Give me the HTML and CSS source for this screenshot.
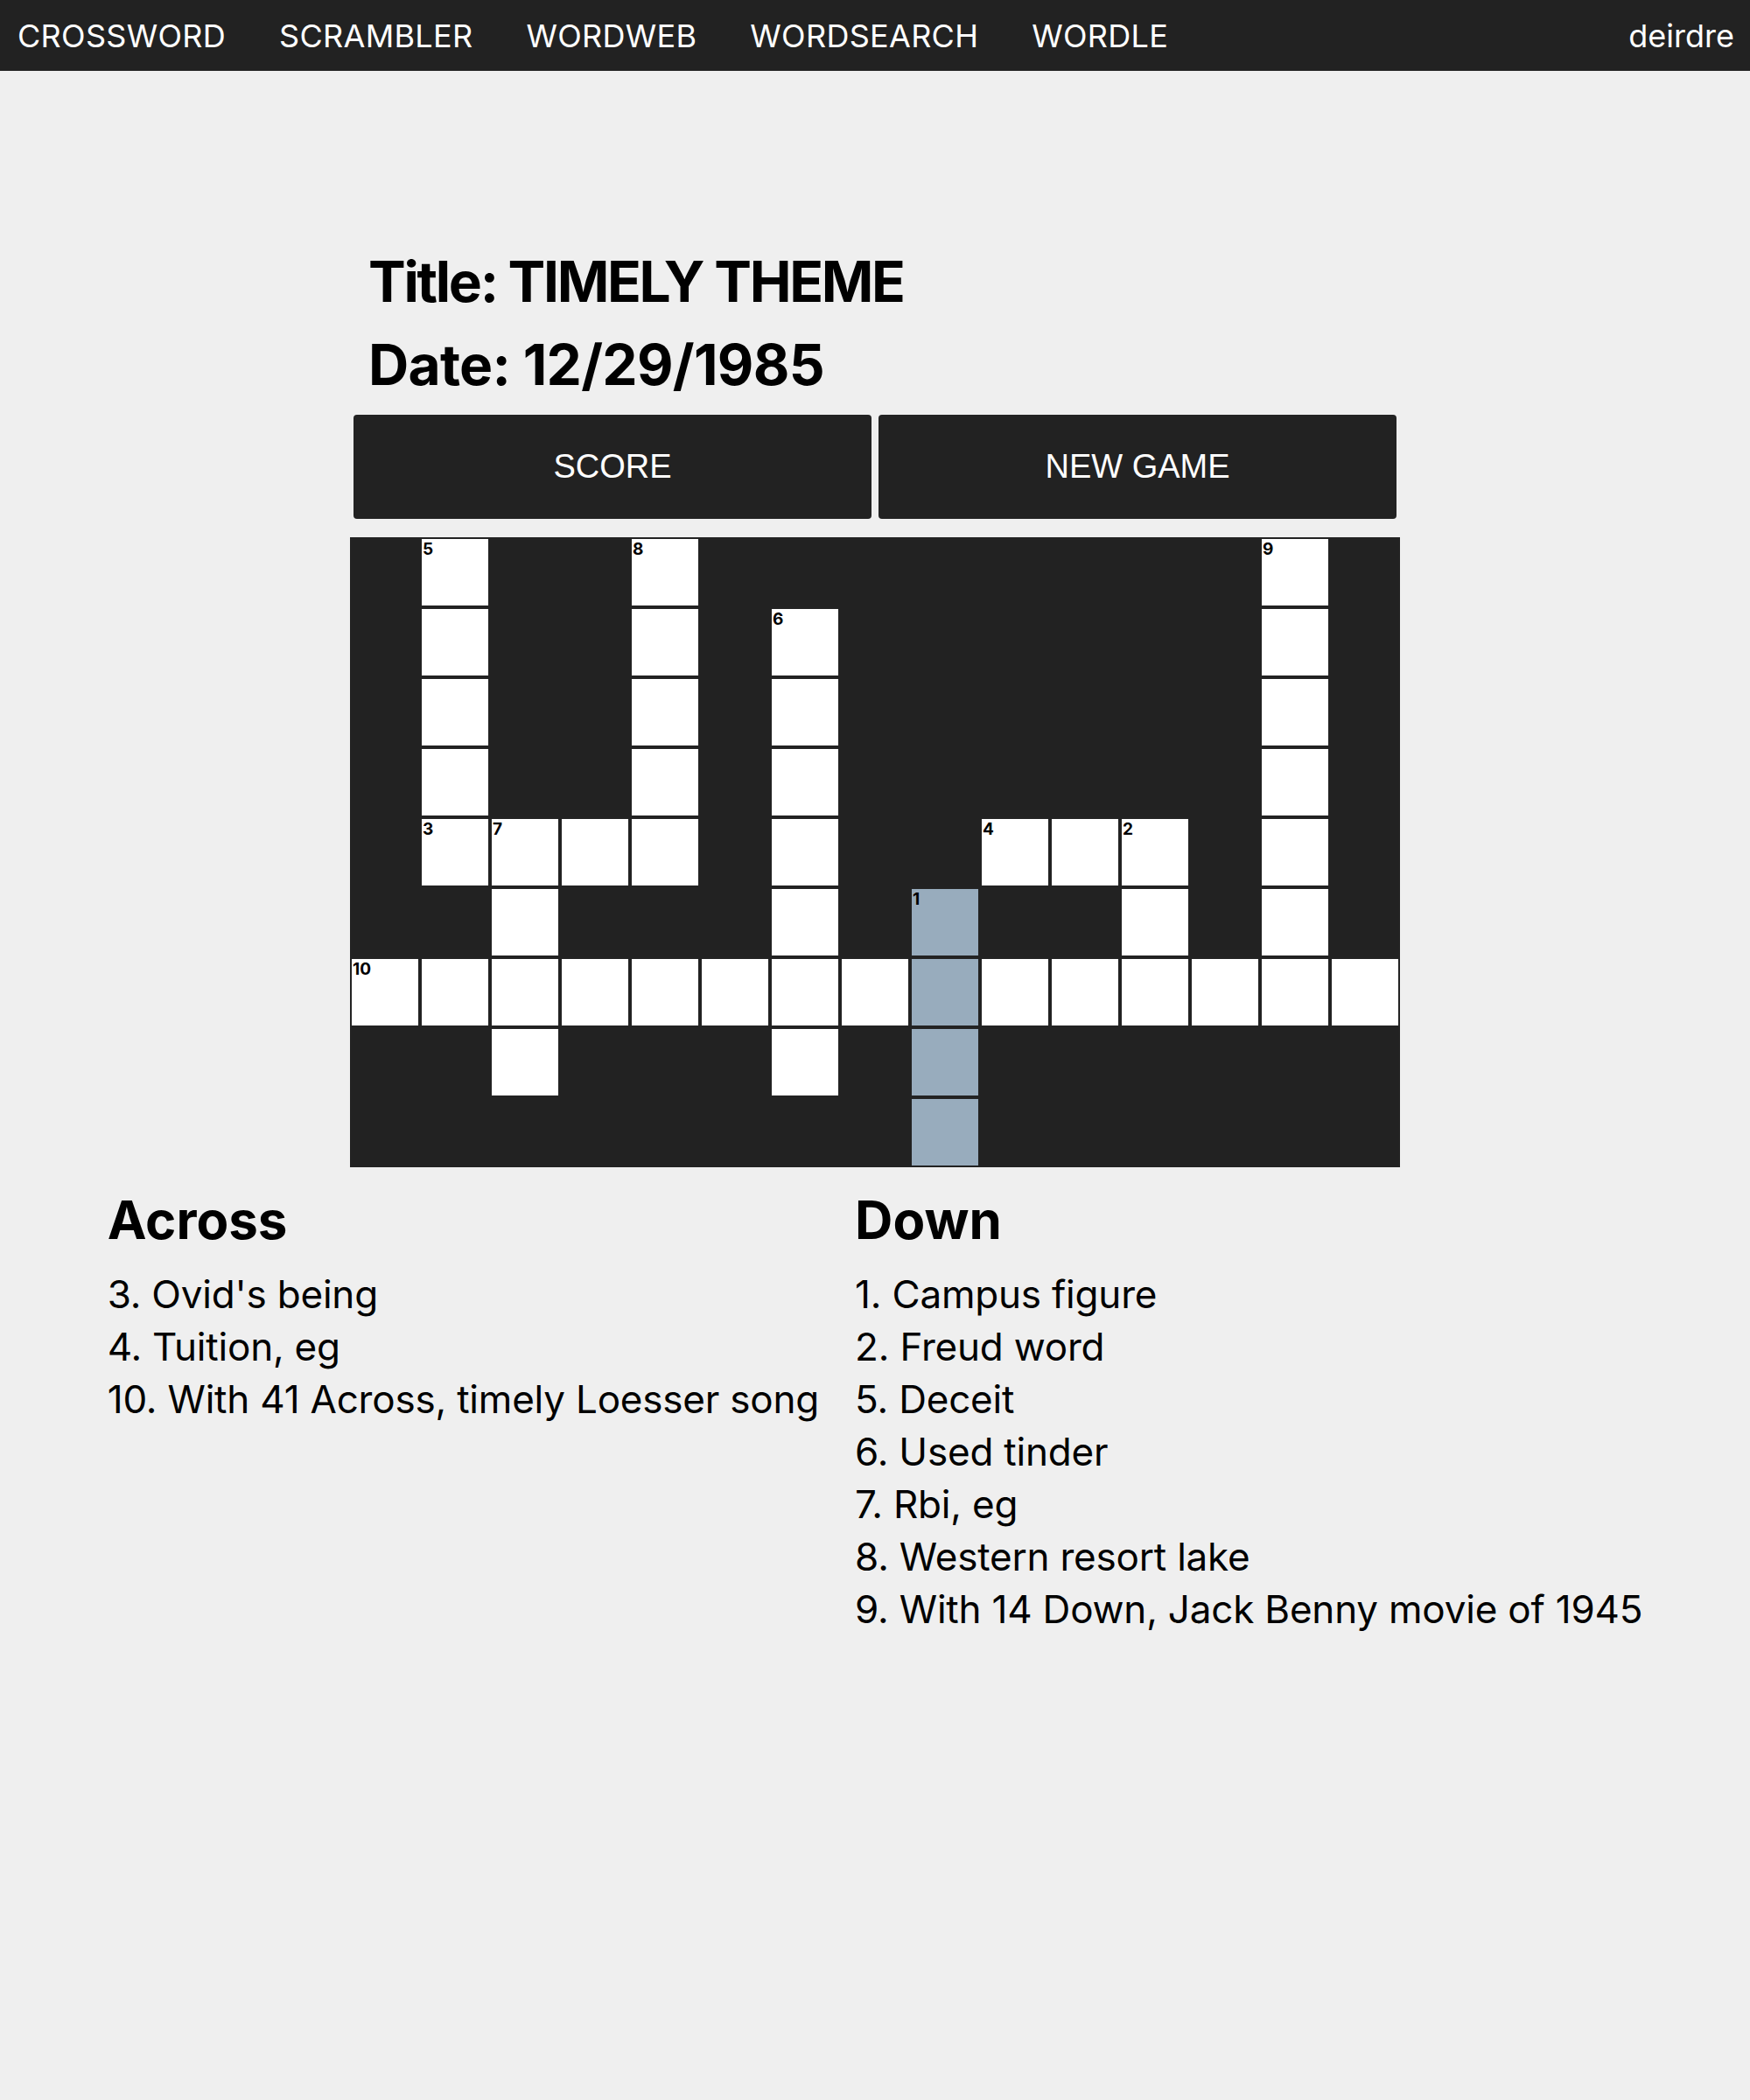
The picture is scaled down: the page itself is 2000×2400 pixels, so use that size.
FILE: index.html
```html
<!DOCTYPE html>
<html lang="en">
<head>
<meta charset="utf-8">
<title>Crossword</title>
<link rel="stylesheet" href="styles.css">
</head>
<body>
<nav class="topnav">
  <a class="navlink" href="#">CROSSWORD</a>
  <a class="navlink" href="#">SCRAMBLER</a>
  <a class="navlink" href="#">WORDWEB</a>
  <a class="navlink" href="#">WORDSEARCH</a>
  <a class="navlink" href="#">WORDLE</a>
  <a class="navlink user" href="#">deirdre</a>
</nav>
<main class="main">
  <section class="board">
    <h2 class="meta meta-title">Title: TIMELY THEME</h2>
    <h2 class="meta meta-date">Date: 12/29/1985</h2>
    <div class="actions">
      <button class="btn">SCORE</button>
      <button class="btn">NEW GAME</button>
    </div>
    <div class="grid">
      <!-- row 0 -->
      <div class="b"></div><div class="w"><span class="num">5</span></div><div class="b"></div><div class="b"></div><div class="w"><span class="num">8</span></div><div class="b"></div><div class="b"></div><div class="b"></div><div class="b"></div><div class="b"></div><div class="b"></div><div class="b"></div><div class="b"></div><div class="w"><span class="num">9</span></div><div class="b"></div>
      <!-- row 1 -->
      <div class="b"></div><div class="w"></div><div class="b"></div><div class="b"></div><div class="w"></div><div class="b"></div><div class="w"><span class="num">6</span></div><div class="b"></div><div class="b"></div><div class="b"></div><div class="b"></div><div class="b"></div><div class="b"></div><div class="w"></div><div class="b"></div>
      <!-- row 2 -->
      <div class="b"></div><div class="w"></div><div class="b"></div><div class="b"></div><div class="w"></div><div class="b"></div><div class="w"></div><div class="b"></div><div class="b"></div><div class="b"></div><div class="b"></div><div class="b"></div><div class="b"></div><div class="w"></div><div class="b"></div>
      <!-- row 3 -->
      <div class="b"></div><div class="w"></div><div class="b"></div><div class="b"></div><div class="w"></div><div class="b"></div><div class="w"></div><div class="b"></div><div class="b"></div><div class="b"></div><div class="b"></div><div class="b"></div><div class="b"></div><div class="w"></div><div class="b"></div>
      <!-- row 4 -->
      <div class="b"></div><div class="w"><span class="num">3</span></div><div class="w"><span class="num">7</span></div><div class="w"></div><div class="w"></div><div class="b"></div><div class="w"></div><div class="b"></div><div class="b"></div><div class="w"><span class="num">4</span></div><div class="w"></div><div class="w"><span class="num">2</span></div><div class="b"></div><div class="w"></div><div class="b"></div>
      <!-- row 5 -->
      <div class="b"></div><div class="b"></div><div class="w"></div><div class="b"></div><div class="b"></div><div class="b"></div><div class="w"></div><div class="b"></div><div class="w h"><span class="num">1</span></div><div class="b"></div><div class="b"></div><div class="w"></div><div class="b"></div><div class="w"></div><div class="b"></div>
      <!-- row 6 -->
      <div class="w"><span class="num">10</span></div><div class="w"></div><div class="w"></div><div class="w"></div><div class="w"></div><div class="w"></div><div class="w"></div><div class="w"></div><div class="w h"></div><div class="w"></div><div class="w"></div><div class="w"></div><div class="w"></div><div class="w"></div><div class="w"></div>
      <!-- row 7 -->
      <div class="b"></div><div class="b"></div><div class="w"></div><div class="b"></div><div class="b"></div><div class="b"></div><div class="w"></div><div class="b"></div><div class="w h"></div><div class="b"></div><div class="b"></div><div class="b"></div><div class="b"></div><div class="b"></div><div class="b"></div>
      <!-- row 8 -->
      <div class="b"></div><div class="b"></div><div class="b"></div><div class="b"></div><div class="b"></div><div class="b"></div><div class="b"></div><div class="b"></div><div class="w h"></div><div class="b"></div><div class="b"></div><div class="b"></div><div class="b"></div><div class="b"></div><div class="b"></div>
    </div>
  </section>
  <section class="clues">
    <div class="clue-col">
      <h3 class="clue-head">Across</h3>
      <ul class="clue-list">
        <li>3. Ovid's being</li>
        <li>4. Tuition, eg</li>
        <li>10. With 41 Across, timely Loesser song</li>
      </ul>
    </div>
    <div class="clue-col">
      <h3 class="clue-head">Down</h3>
      <ul class="clue-list">
        <li>1. Campus figure</li>
        <li>2. Freud word</li>
        <li>5. Deceit</li>
        <li>6. Used tinder</li>
        <li>7. Rbi, eg</li>
        <li>8. Western resort lake</li>
        <li>9. With 14 Down, Jack Benny movie of 1945</li>
      </ul>
    </div>
  </section>
</main>
</body>
</html>
```

FILE: styles.css
```css
* {
  box-sizing: border-box;
}

html, body {
  margin: 0;
  padding: 0;
}

body {
  background: #efefef;
  color: #000;
  font-family: Inter, "Noto Sans", "Liberation Sans", sans-serif;
  min-height: 2400px;
}

.topnav {
  height: 81px;
  background: #222222;
  display: flex;
  align-items: center;
  gap: 61px;
  padding: 0 18px 0 20px;
}

.navlink {
  color: #ffffff;
  text-decoration: none;
  font-size: 36px;
  line-height: 1;
  letter-spacing: 0.3px;
}

.navlink.user {
  margin-left: auto;
  letter-spacing: 0;
}

.main {
  padding-top: 193px;
}

.board {
  width: 1200px;
  margin: 0 auto;
}

.meta {
  margin: 0;
  padding-left: 21px;
  font-size: 64px;
  font-weight: 700;
  line-height: 95px;
}

.meta-title {
  letter-spacing: -2.3px;
}

.meta-date {
  letter-spacing: -0.7px;
}

.actions {
  display: flex;
  gap: 8px;
  padding: 0 4px;
  margin-top: 10px;
}

.btn {
  flex: 1;
  height: 119px;
  background: #222222;
  color: #ffffff;
  border: none;
  border-radius: 4px;
  font-family: "Liberation Sans", Arial, sans-serif;
  font-size: 38px;
}

.grid {
  margin-top: 21px;
  display: grid;
  grid-template-columns: repeat(15, 80px);
  grid-auto-rows: 80px;
  background: #222222;
  width: 1200px;
}

.b {
  background: #222222;
}

.w {
  position: relative;
  background: #ffffff;
  border: 2px solid #222222;
}

.w.h {
  background: #98acbd;
}

.num {
  position: absolute;
  top: 0;
  left: 1px;
  font-size: 19px;
  font-weight: 700;
  line-height: 23px;
}

.clues {
  display: flex;
  justify-content: center;
  gap: 41px;
  margin-top: 24px;
}

.clue-head {
  margin: 0;
  font-size: 60px;
  font-weight: 700;
  line-height: 73px;
}

.clue-list {
  list-style: none;
  margin: 18px 0 0 0;
  padding: 0;
  font-size: 44px;
  line-height: 60px;
  letter-spacing: -0.2px;
}
```
